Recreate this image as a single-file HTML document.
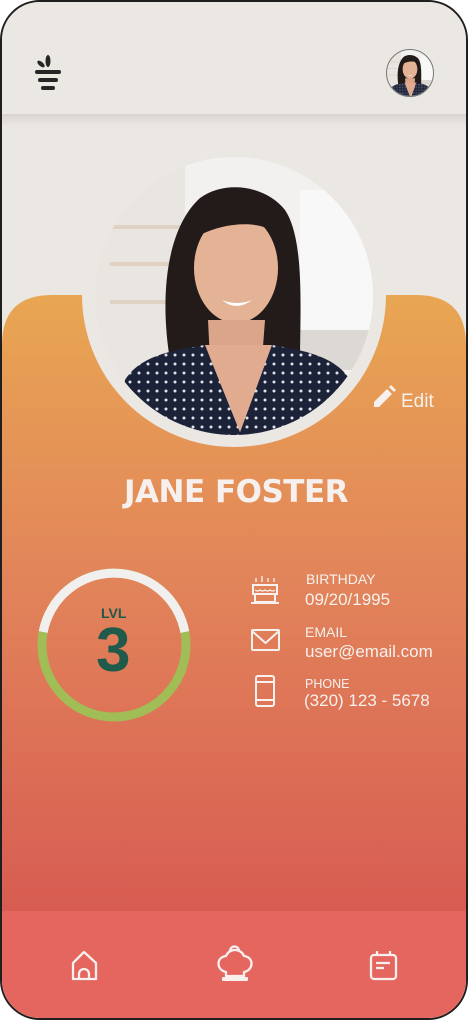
<!DOCTYPE html>
<html><head><meta charset="utf-8"><style>
html,body{margin:0;padding:0;background:#fff;}
body{width:468px;height:1020px;position:relative;overflow:hidden;font-family:"Liberation Sans",sans-serif;}
.frame{position:absolute;left:0;top:0;width:464px;height:1016px;border:2px solid #1f1f1f;border-radius:40px;overflow:hidden;background:#ebe7e3;}
svg{position:absolute;left:0;top:0;}
.t{position:absolute;color:#f6f1ee;white-space:nowrap;}
</style></head><body>
<div class="frame">
<svg width="464" height="1016" viewBox="2 2 464 1016">
<defs>
<linearGradient id="og" x1="0" y1="0" x2="0" y2="1">
<stop offset="0" stop-color="#e8a652"/>
<stop offset="0.45" stop-color="#e2855a"/>
<stop offset="1" stop-color="#d75c52"/>
</linearGradient>
<linearGradient id="sh" x1="0" y1="0" x2="0" y2="1">
<stop offset="0" stop-color="#d9d4cf"/><stop offset="1" stop-color="#ebe7e3"/>
</linearGradient>
<clipPath id="pc"><circle cx="234" cy="296" r="139"/></clipPath>
<clipPath id="ac"><circle cx="410" cy="73" r="23"/></clipPath>
<pattern id="dots" width="9" height="9" patternUnits="userSpaceOnUse"><rect width="9" height="9" fill="#1c2238"/><circle cx="4" cy="4" r="1.5" fill="#dfe2ea"/></pattern>
<g id="person">
<rect x="80" y="150" width="300" height="300" fill="#f2f1ef"/>
<rect x="80" y="150" width="105" height="300" fill="#e9e5e0"/>
<rect x="110" y="225" width="80" height="4" fill="#e0d2c2"/>
<rect x="110" y="262" width="80" height="4" fill="#e0d2c2"/>
<rect x="110" y="300" width="80" height="4" fill="#e0d2c2"/>
<rect x="300" y="190" width="80" height="150" fill="#f8f8f8"/>
<rect x="300" y="330" width="80" height="40" fill="#dcd8d3"/>
<path d="M170 360 C160 300 165 230 200 198 C225 180 265 185 285 210 C305 240 300 310 300 365 Z" fill="#231b1a"/>
<ellipse cx="236" cy="268" rx="42" ry="55" fill="#e4b396"/>
<path d="M185 245 C195 210 230 205 262 215 C285 225 280 250 282 240 C270 220 230 220 200 235 Z" fill="#231b1a"/>
<path d="M222 300 Q236 312 252 300 Q237 306 222 300Z" fill="#fff"/>
<path d="M208 320 L265 320 L262 360 L210 360Z" fill="#dba58a"/>
<path d="M125 380 C140 355 175 350 205 345 L240 432 L272 345 C300 350 335 355 350 380 L360 450 L115 450Z" fill="url(#dots)"/>
<path d="M205 345 L240 432 L272 345 Z" fill="#e1ab90"/>
</g>
</defs>
<rect x="2" y="2" width="464" height="1016" fill="#ebe7e3"/>
<rect x="2" y="114" width="464" height="12" fill="url(#sh)"/>
<path d="M2 345 Q2 295 52 295 L82 295 A152 152 0 0 0 386 295 L416 295 Q466 295 466 345 L466 912 L2 912 Z" fill="url(#og)"/>
<rect x="2" y="911" width="464" height="110" fill="#e5665e"/>
<g clip-path="url(#pc)"><use href="#person"/></g>
<!-- menu icon -->
<g fill="#262626">
<rect x="35" y="70" width="26" height="4" rx="2"/>
<rect x="38" y="78" width="20" height="4" rx="2"/>
<rect x="41" y="86" width="14" height="4" rx="2"/>
<ellipse cx="48" cy="61" rx="2.5" ry="6"/>
<ellipse cx="41" cy="64" rx="2.2" ry="4.5" transform="rotate(-50 41 64)"/>
</g>
<!-- avatar -->
<g clip-path="url(#ac)"><g transform="translate(410 73) scale(0.175) translate(-236 -290)"><use href="#person"/></g></g>
<circle cx="410" cy="73" r="23.5" fill="none" stroke="#777" stroke-width="1"/>
<!-- level ring -->
<circle cx="114" cy="645" r="72" fill="none" stroke="#a1bd55" stroke-width="9"/>
<path d="M43.2 632 A72 72 0 0 1 184.8 632" fill="none" stroke="#f2f0ee" stroke-width="9"/>
<!-- icons -->
<g fill="none" stroke="#f6f1ee" stroke-width="2">
<rect x="253" y="585" width="24" height="9"/>
<rect x="255" y="594" width="20" height="8"/>
<path d="M251 603 H279"/>
<path d="M256 582 V578 M262 582 V576 M268 582 V578 M274 582 V578" stroke-width="1.3"/>
<path d="M255 590 q3 2 5 0 q3 2 5 0 q3 2 5 0 q3 2 5 0" stroke-width="1.3"/>
<rect x="252" y="630" width="27" height="20" rx="1"/>
<path d="M252 631 L265.5 643 L279 631"/>
<rect x="256" y="676" width="18" height="30" rx="2"/>
<path d="M256 682 H274 M256 700 H274"/>
</g>
<!-- edit pencil -->
<path d="M374 407 L374 402 L387 389 L392 394 L379 407 Z M389 387 L391 385 L396 390 L394 392 Z" fill="#f6f1ee"/>
<!-- nav icons -->
<g fill="none" stroke="#f8f0ee" stroke-width="2.3" stroke-linejoin="round">
<path d="M73 979 V963 L84 952 L96 963 V979 Z"/>
<path d="M79 979 V974 A5 5 0 0 1 89 974 V979"/>
<path d="M226 972 C216 970 216 957 226 956 C229 948 241 948 244 956 C254 957 254 970 244 972 V976 H226 Z"/>
<path d="M230 951 A4 4 0 0 1 239 951"/>
<rect x="371" y="955" width="25" height="24" rx="3"/>
<path d="M377 951 V956 M390 951 V956 M376 963 H390 M376 968 H384"/>
</g>
<rect x="222" y="977" width="26" height="4" rx="1" fill="#f8f0ee"/>
</svg>
<div class="t" style="left:399px;top:389px;font-size:19px;">Edit</div>
<div class="t" style="left:0;width:468px;text-align:center;top:472px;font-size:31px;font-weight:bold;font-family:'DejaVu Sans',sans-serif;letter-spacing:-0.5px;">JANE FOSTER</div>
<div class="t" style="left:99px;top:603px;font-size:14px;font-weight:bold;color:#1f5a4a;">LVL</div>
<div class="t" style="left:94px;top:613px;font-size:62px;font-weight:bold;color:#1f5a4a;">3</div>
<div class="t" style="left:304px;top:569px;font-size:14px;">BIRTHDAY</div>
<div class="t" style="left:303px;top:588px;font-size:17px;">09/20/1995</div>
<div class="t" style="left:303px;top:622px;font-size:14px;">EMAIL</div>
<div class="t" style="left:303px;top:640px;font-size:17px;">user@email.com</div>
<div class="t" style="left:303px;top:675px;font-size:12.5px;">PHONE</div>
<div class="t" style="left:302px;top:689px;font-size:17px;">(320) 123 - 5678</div>
</div>
</body></html>
